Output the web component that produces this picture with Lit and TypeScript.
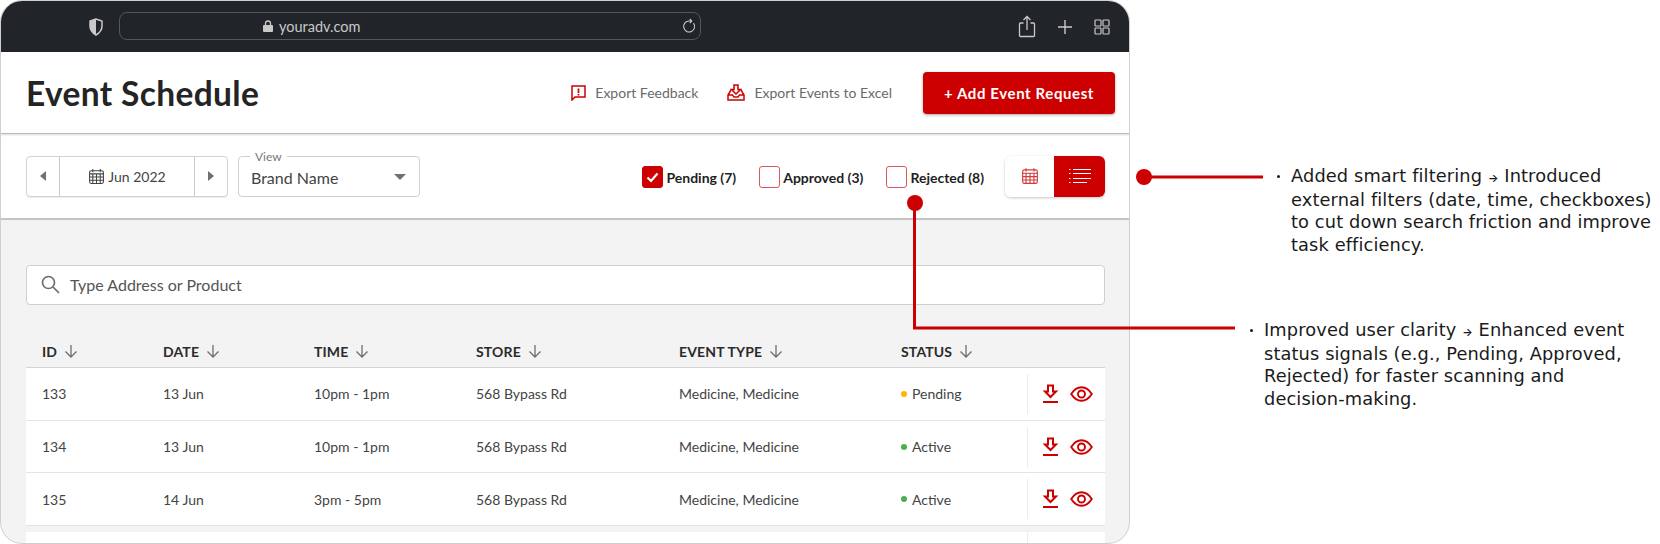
import { LitElement, html, css, svg } from 'lit';
import { customElement } from 'lit/decorators.js';

type Row = { id: string; date: string; time: string; status: 'Pending' | 'Active' };

const ROWS: Row[] = [
  { id: '133', date: '13 Jun', time: '10pm - 1pm', status: 'Pending' },
  { id: '134', date: '13 Jun', time: '10pm - 1pm', status: 'Active' },
  { id: '135', date: '14 Jun', time: '3pm - 5pm', status: 'Active' },
];
const COLUMNS = ['ID', 'DATE', 'TIME', 'STORE', 'EVENT TYPE', 'STATUS'];

// calendar grid, used in the date stepper and in the view toggle
const calendar = (size: number, color: string) => html`
  <svg width=${size} height=${size} viewBox="0 0 16 16" fill="none" stroke=${color} stroke-width="1">
    <rect x="1.5" y="2.5" width="13" height="12" rx="1.5"></rect>
    <path d="M1.5 5.5h13M1.5 8.5h13M1.5 11.5h13M4.5 5.5v9M8 5.5v9M11.5 5.5v9M4.5 1v3M11.5 1v3"></path>
  </svg>
`;

const arrowDown = html`
  <svg width="14" height="14" viewBox="0 0 14 14" fill="none" stroke="#6e6e6e" stroke-width="1.3">
    <path d="M7 1v12M1.5 7.5 7 13l5.5-5.5"></path>
  </svg>
`;

const download = html`
  <svg width="17" height="20" viewBox="0 0 17 20" fill="none" stroke="#cc0000" stroke-width="2">
    <path d="M6 1.5h5v6h3l-5.5 5.5L3 7.5h3z"></path>
    <path d="M1 18h15"></path>
  </svg>
`;

const eye = html`
  <svg width="23" height="16" viewBox="0 0 23 16" fill="none" stroke="#cc0000" stroke-width="1.9">
    <path d="M1.2 8C4 3.6 7.4 1.2 11.5 1.2S19 3.6 21.8 8c-2.8 4.4-6.2 6.8-10.3 6.8S4 12.4 1.2 8z"></path>
    <circle cx="11.5" cy="8" r="3.5"></circle>
  </svg>
`;

const arrow = html`<span class="arrow">→</span>`;

@customElement('app-root')
export class AppRoot extends LitElement {
  static styles = css`
    :host {
      display: block;
      position: relative;
      width: 1660px;
      height: 544px;
      overflow: hidden;
      background: #fff;
      font-family: 'Lato', 'Liberation Sans', sans-serif;
      color: #2e2f32;
    }
    .window {
      box-sizing: border-box;
      width: 1130px;
      height: 544px;
      border: 1px solid #cfcfcf;
      border-radius: 22px;
      overflow: hidden;
      background: #f3f3f3;
    }

    /* browser chrome */
    .chrome {
      display: flex;
      align-items: center;
      height: 51px;
      padding: 0 19px 0 87px;
      background: #212529;
      color: #c9c9c9;
    }
    .address {
      box-sizing: border-box;
      display: flex;
      align-items: center;
      gap: 6px;
      position: relative;
      width: 582px;
      height: 28px;
      margin: -1px 0 0 15px;
      padding-left: 143px;
      border: 1px solid #53575b;
      border-radius: 8px;
      font-size: 14.5px;
    }
    .reload {
      position: absolute;
      right: 3px;
      top: 5px;
    }
    .chrome-actions {
      display: flex;
      align-items: center;
      gap: 21px;
      margin-left: auto;
    }

    /* page header */
    .header {
      display: flex;
      align-items: center;
      box-sizing: border-box;
      height: 82px;
      padding: 0 14px 0 25px;
      background: #fff;
      border-bottom: 1px solid #b9b9b9;
      box-shadow: 0 1px 2px rgba(0, 0, 0, 0.15);
      position: relative;
    }
    h1 {
      margin: 0 auto 0 0;
      font-size: 33.5px;
      font-weight: 700;
      color: #242424;
      letter-spacing: 0.35px;
    }
    .link {
      display: flex;
      align-items: center;
      gap: 9px;
      margin-right: 31px;
      font-size: 14px;
      color: #6a6a6a;
    }
    .link.feedback {
      margin-right: 29px;
    }
    .primary {
      width: 192px;
      height: 42px;
      border: 0;
      border-radius: 4px;
      background: #cc0000;
      color: #fff;
      font: 700 15px 'Lato', sans-serif;
      letter-spacing: 0.6px;
      box-shadow: 0 1px 3px rgba(0, 0, 0, 0.35);
    }

    /* filters */
    .toolbar {
      display: flex;
      align-items: center;
      box-sizing: border-box;
      height: 86px;
      padding: 0 24px 0 25px;
      background: #fff;
      border-bottom: 2px solid #c4c4c4;
    }
    .stepper {
      display: flex;
      box-sizing: border-box;
      width: 202px;
      height: 41px;
      border: 1px solid #d2d2d2;
      border-radius: 4px;
      box-shadow: 0 1px 1px rgba(0, 0, 0, 0.08);
    }
    .step {
      display: flex;
      align-items: center;
      justify-content: center;
      width: 32px;
      flex: none;
    }
    .step.prev { border-right: 1px solid #c8c8c8; }
    .step.next { border-left: 1px solid #c8c8c8; }
    .month {
      flex: 1;
      display: flex;
      align-items: center;
      justify-content: center;
      gap: 3px;
      padding-top: 1px;
      font-size: 14px;
      color: #444;
    }
    .select {
      position: relative;
      display: flex;
      align-items: center;
      justify-content: space-between;
      box-sizing: border-box;
      width: 182px;
      height: 41px;
      margin-left: 10px;
      padding: 2px 13px 0 12px;
      border: 1px solid #cfcfcf;
      border-radius: 4px;
      font-size: 16px;
      color: #444;
    }
    .legend {
      position: absolute;
      left: 11px;
      top: -8px;
      padding: 0 5px;
      background: #fff;
      font-size: 12px;
      color: #777;
    }
    .filters {
      display: flex;
      align-items: center;
      margin: 2px 21px 0 auto;
      gap: 23px;
    }
    .check {
      display: flex;
      align-items: center;
      gap: 3px;
      font-size: 14px;
      font-weight: 700;
      color: #1f1f1f;
    }
    .box {
      display: flex;
      align-items: center;
      justify-content: center;
      box-sizing: border-box;
      width: 21px;
      height: 22px;
      border: 1px solid #d9595a;
      border-radius: 3px;
    }
    .box.on {
      background: #cc0000;
      border-color: #cc0000;
    }
    .toggle {
      display: flex;
      width: 100px;
      height: 41px;
      border-radius: 6px;
      overflow: hidden;
      box-shadow: 0 1px 3px rgba(0, 0, 0, 0.22);
    }
    .toggle > div {
      display: flex;
      align-items: center;
      justify-content: center;
    }
    .toggle .cal { width: 49px; background: #fff; }
    .toggle .list { flex: 1; background: #cc0000; }

    /* list */
    .content {
      padding: 45px 24px 0 25px;
    }
    .search {
      display: flex;
      align-items: center;
      gap: 10px;
      box-sizing: border-box;
      height: 40px;
      padding: 0 0 2px 14px;
      background: #fff;
      border: 1px solid #cfcfcf;
      border-radius: 4px;
      font-size: 16px;
      color: #555;
    }
    .row {
      display: grid;
      grid-template-columns: 121px 151px 162px 203px 222px 126px 78px;
      padding-left: 16px;
      align-items: center;
    }
    .head {
      height: 63px;
      padding-top: 30px;
      box-sizing: border-box;
      border-bottom: 1px solid #d4d4d4;
      font-size: 14px;
      font-weight: 700;
      letter-spacing: 0.15px;
      color: #2b2b2b;
    }
    .head span {
      display: flex;
      align-items: center;
      gap: 7px;
    }
    .body {
      height: 51.7px;
      background: #fff;
      border-bottom: 1px solid #e4e4e4;
      font-size: 14px;
      color: #444;
    }
    .status {
      display: flex;
      align-items: center;
      gap: 5px;
    }
    .dot {
      width: 6px;
      height: 6px;
      border-radius: 50%;
    }
    .dot.Pending { background: #ffb400; }
    .dot.Active { background: #4caf50; }
    .actions {
      display: flex;
      align-items: center;
      height: 40px;
      gap: 11px;
      padding-left: 14px;
      border-left: 1px solid #ececec;
    }
    .stub {
      height: 30px;
      background: #fff;
    }
    .stub i {
      display: block;
      width: 1px;
      height: 30px;
      margin: 6px 0 0 1001px;
      background: #ececec;
    }

    /* callouts: placed on the free canvas around the window */
    .wires {
      position: absolute;
      left: 0;
      top: 0;
      pointer-events: none;
    }
    .note {
      position: absolute;
      margin: 0;
      white-space: nowrap;
      font-family: 'DejaVu Sans', 'Open Sans', sans-serif;
      font-size: 17.8px;
      letter-spacing: 0.12px;
      line-height: 22.2px;
      color: #1a1a1a;
    }
    .note::before {
      content: '';
      position: absolute;
      left: -14px;
      top: 10px;
      width: 3px;
      height: 3px;
      border-radius: 50%;
      background: #1a1a1a;
    }
    .note.filtering { left: 1291px; top: 165px; }
    .note.clarity { left: 1264px; top: 319px; }
    .arrow {
      font-family: 'Inter', sans-serif;
      font-size: 11px;
      font-weight: 600;
    }
  `;

  private _chrome() {
    return html`
      <div class="chrome">
        <svg width="16" height="18" viewBox="0 0 16 18">
          <path d="M8 1 2 3v5c0 4 2.6 7 6 9 3.4-2 6-5 6-9V3z" fill="none" stroke="#c9c9c9" stroke-width="1.5"></path>
          <path d="M8 1 2 3v5c0 4 2.6 7 6 9z" fill="#c9c9c9"></path>
        </svg>
        <div class="address">
          <svg width="10" height="12" viewBox="0 0 10 12" fill="#c9c9c9">
            <rect x="0" y="5" width="10" height="7" rx="1"></rect>
            <path d="M2.5 5V3.5a2.5 2.5 0 0 1 5 0V5" fill="none" stroke="#c9c9c9" stroke-width="1.3"></path>
          </svg>
          youradv.com
          <svg class="reload" width="16" height="16" viewBox="0 0 16 16" fill="none" stroke="#c9c9c9" stroke-width="1.1">
            <path d="M12.5 5.2A5.5 5.5 0 1 1 8 3H10.5M8.8 1 10.8 3 8.8 5"></path>
          </svg>
        </div>
        <div class="chrome-actions">
          <svg width="18" height="23" viewBox="0 0 18 23" fill="none" stroke="#c9c9c9" stroke-width="1.3">
            <path d="M5.5 8H2.5a1 1 0 0 0-1 1v11.500a1 1 0 0 0 1 1h13a1 1 0 0 0 1-1V9a1 1 0 0 0-1-1h-3"></path>
            <path d="M9 15V1.500M5.500 5 9 1.500 12.500 5"></path>
          </svg>
          <svg width="16" height="16" viewBox="0 0 16 16" stroke="#c9c9c9" stroke-width="1.4">
            <path d="M8 1v14M1 8h14"></path>
          </svg>
          <svg width="16" height="16" viewBox="0 0 16 16" fill="none" stroke="#c9c9c9" stroke-width="1.2">
            <rect x="1" y="1" width="6" height="6" rx="0.8"></rect>
            <rect x="9" y="1" width="6" height="6" rx="0.8"></rect>
            <rect x="1" y="9" width="6" height="6" rx="0.8"></rect>
            <rect x="9" y="9" width="6" height="6" rx="0.8"></rect>
          </svg>
        </div>
      </div>
    `;
  }

  private _header() {
    return html`
      <div class="header">
        <h1>Event Schedule</h1>
        <div class="link feedback">
          <svg width="15" height="16" viewBox="0 0 15 16" fill="none" stroke="#cc0000" stroke-width="1.5">
            <path d="M1 1h13v11H4l-3 3z"></path>
            <path d="M7.5 3.5v4.5M7.5 9v1.5" stroke-width="1.7"></path>
          </svg>
          Export Feedback
        </div>
        <div class="link">
          <svg width="18" height="17" viewBox="0 0 18 17" fill="none" stroke="#cc0000" stroke-width="1.5">
            <path d="M7 1h4v4.5h2.5L9 10 4.5 5.5H7z"></path>
            <path d="M4 6 1 11v5h16v-5l-3-5M1 11h4.5l1.5 2h4l1.5-2H17"></path>
          </svg>
          Export Events to Excel
        </div>
        <button class="primary">+ Add Event Request</button>
      </div>
    `;
  }

  private _check(label: string, on = false) {
    return html`
      <div class="check">
        <span class="box ${on ? 'on' : ''}">
          ${on
            ? html`<svg width="13" height="11" viewBox="0 0 13 11" fill="none" stroke="#fff" stroke-width="2.2">
                <path d="M1.5 5.5 5 9l6.5-7.5"></path>
              </svg>`
            : ''}
        </span>
        ${label}
      </div>
    `;
  }

  private _toolbar() {
    return html`
      <div class="toolbar">
        <div class="stepper">
          <div class="step prev">
            <svg width="6" height="10" viewBox="0 0 6 10" fill="#707070"><path d="M6 0v10L0 5z"></path></svg>
          </div>
          <div class="month">${calendar(17, '#444')} Jun 2022</div>
          <div class="step next">
            <svg width="6" height="10" viewBox="0 0 6 10" fill="#707070"><path d="M0 0v10l6-5z"></path></svg>
          </div>
        </div>
        <div class="select">
          <span class="legend">View</span>
          Brand Name
          <svg width="12" height="6" viewBox="0 0 12 6" fill="#707070"><path d="M0 0h12L6 6z"></path></svg>
        </div>
        <div class="filters">
          ${this._check('Pending (7)', true)} ${this._check('Approved (3)')} ${this._check('Rejected (8)')}
        </div>
        <div class="toggle">
          <div class="cal">${calendar(18, '#d23b3b')}</div>
          <div class="list">
            <svg width="22" height="16" viewBox="0 0 22 16" stroke="#fff" stroke-width="1">
              <path d="M0 1.500h1.500M0 5.500h1.500M0 10.500h1.500M0 14.500h1.500M4 1.500h18M4 5.500h18M4 10.500h18M4 14.500h14"></path>
            </svg>
          </div>
        </div>
      </div>
    `;
  }

  private _table() {
    return html`
      <div class="row head">
        ${COLUMNS.map((c) => html`<span>${c} ${arrowDown}</span>`)}
      </div>
      ${ROWS.map(
        (r) => html`
          <div class="row body">
            <span>${r.id}</span>
            <span>${r.date}</span>
            <span>${r.time}</span>
            <span>568 Bypass Rd</span>
            <span>Medicine, Medicine</span>
            <span class="status"><i class="dot ${r.status}"></i>${r.status}</span>
            <div class="actions">${download} ${eye}</div>
          </div>
        `
      )}
      <div class="stub"><i></i></div>
    `;
  }

  render() {
    return html`
      <div class="window">
        ${this._chrome()} ${this._header()} ${this._toolbar()}
        <div class="content">
          <div class="search">
            <svg width="19" height="19" viewBox="0 0 19 19" fill="none" stroke="#6e6e6e" stroke-width="1.7">
              <circle cx="7.5" cy="7.5" r="6"></circle>
              <path d="m12 12 6 6"></path>
            </svg>
            Type Address or Product
          </div>
          ${this._table()}
        </div>
      </div>
      <svg class="wires" width="1660" height="544" fill="#cc0000">
        ${svg`
          <circle cx="1144" cy="177" r="8"></circle>
          <path d="M1144 177H1263" stroke="#cc0000" stroke-width="3"></path>
          <circle cx="915" cy="203" r="8"></circle>
          <path d="M914.5 203V328H1235" fill="none" stroke="#cc0000" stroke-width="3"></path>
        `}
      </svg>
      <p class="note filtering">
        Added smart filtering ${arrow} Introduced<br />
        external filters (date, time, checkboxes)<br />
        to cut down search friction and improve<br />
        task efficiency.
      </p>
      <p class="note clarity">
        Improved user clarity ${arrow} Enhanced event<br />
        status signals (e.g., Pending, Approved,<br />
        Rejected) for faster scanning and<br />
        decision-making.
      </p>
    `;
  }
}
